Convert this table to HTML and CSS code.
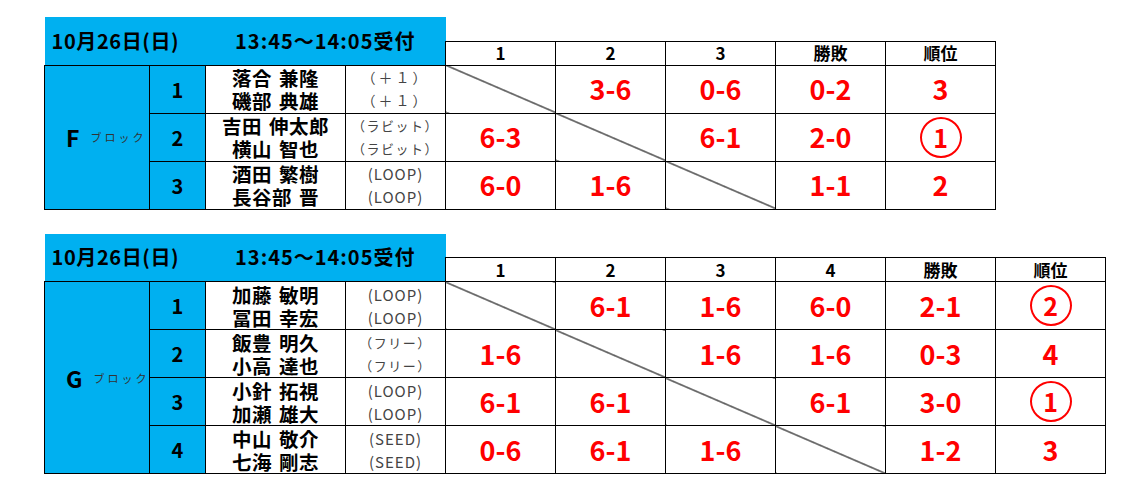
FILE: index.html
```html
<!DOCTYPE html>
<html lang="ja">
<head>
<meta charset="utf-8">
<title>ブロック表</title>
<link rel="stylesheet" href="styles.css">
</head>
<body>
<div class="page">
  <table class="league league-3">
    <colgroup>
      <col class="c-block"><col class="c-num"><col class="c-name"><col class="c-team">
      <col class="c-score"><col class="c-score"><col class="c-score"><col class="c-score"><col class="c-score">
    </colgroup>
    <tr class="r-title">
      <td class="title date" colspan="2" rowspan="2">10月26日(日)</td>
      <td class="title time" colspan="2" rowspan="2">13:45～14:05受付</td>
      <td class="blank" colspan="5"></td>
    </tr>
    <tr class="r-head">
      <th>1</th><th>2</th><th>3</th><th>勝敗</th><th>順位</th>
    </tr>
    <tr class="r-data">
      <td class="block" rowspan="3"><span class="letter">F</span><span class="sub">ブロック</span></td>
      <td class="num">1</td>
      <td class="names"><span>落合 兼隆</span><span>磯部 典雄</span></td>
      <td class="team plus"><span>（＋１）</span><span>（＋１）</span></td>
      <td class="diag"></td>
      <td class="score">3-6</td>
      <td class="score">0-6</td>
      <td class="score">0-2</td>
      <td class="score">3</td>
    </tr>
    <tr class="r-data">
      <td class="num">2</td>
      <td class="names"><span>吉田 伸太郎</span><span>横山 智也</span></td>
      <td class="team kana"><span>（ラビット）</span><span>（ラビット）</span></td>
      <td class="score">6-3</td>
      <td class="diag"></td>
      <td class="score">6-1</td>
      <td class="score">2-0</td>
      <td class="score"><span class="circle">1</span></td>
    </tr>
    <tr class="r-data">
      <td class="num">3</td>
      <td class="names"><span>酒田 繁樹</span><span>長谷部 晋</span></td>
      <td class="team"><span>(LOOP)</span><span>(LOOP)</span></td>
      <td class="score">6-0</td>
      <td class="score">1-6</td>
      <td class="diag"></td>
      <td class="score">1-1</td>
      <td class="score">2</td>
    </tr>
  </table>

  <table class="league league-4">
    <colgroup>
      <col class="c-block"><col class="c-num"><col class="c-name"><col class="c-team">
      <col class="c-score"><col class="c-score"><col class="c-score"><col class="c-score"><col class="c-score"><col class="c-score">
    </colgroup>
    <tr class="r-title">
      <td class="title date" colspan="2" rowspan="2">10月26日(日)</td>
      <td class="title time" colspan="2" rowspan="2">13:45～14:05受付</td>
      <td class="blank" colspan="6"></td>
    </tr>
    <tr class="r-head">
      <th>1</th><th>2</th><th>3</th><th>4</th><th>勝敗</th><th>順位</th>
    </tr>
    <tr class="r-data">
      <td class="block" rowspan="4"><span class="letter">G</span><span class="sub">ブロック</span></td>
      <td class="num">1</td>
      <td class="names"><span>加藤 敏明</span><span>冨田 幸宏</span></td>
      <td class="team"><span>(LOOP)</span><span>(LOOP)</span></td>
      <td class="diag"></td>
      <td class="score">6-1</td>
      <td class="score">1-6</td>
      <td class="score">6-0</td>
      <td class="score">2-1</td>
      <td class="score"><span class="circle">2</span></td>
    </tr>
    <tr class="r-data">
      <td class="num">2</td>
      <td class="names"><span>飯豊 明久</span><span>小高 達也</span></td>
      <td class="team kana"><span>（フリー）</span><span>（フリー）</span></td>
      <td class="score">1-6</td>
      <td class="diag"></td>
      <td class="score">1-6</td>
      <td class="score">1-6</td>
      <td class="score">0-3</td>
      <td class="score">4</td>
    </tr>
    <tr class="r-data">
      <td class="num">3</td>
      <td class="names"><span>小針 拓視</span><span>加瀬 雄大</span></td>
      <td class="team"><span>(LOOP)</span><span>(LOOP)</span></td>
      <td class="score">6-1</td>
      <td class="score">6-1</td>
      <td class="diag"></td>
      <td class="score">6-1</td>
      <td class="score">3-0</td>
      <td class="score"><span class="circle">1</span></td>
    </tr>
    <tr class="r-data">
      <td class="num">4</td>
      <td class="names"><span>中山 敬介</span><span>七海 剛志</span></td>
      <td class="team"><span>(SEED)</span><span>(SEED)</span></td>
      <td class="score">0-6</td>
      <td class="score">6-1</td>
      <td class="score">1-6</td>
      <td class="diag"></td>
      <td class="score">1-2</td>
      <td class="score">3</td>
    </tr>
  </table>
</div>
</body>
</html>
```

FILE: styles.css
```css
html, body {
  margin: 0;
  padding: 0;
  background: #ffffff;
}

.page {
  padding: 17px 0 0 44px;
  font-family: "Noto Sans CJK JP", "Noto Sans", sans-serif;
  color: #000;
}

.league {
  border-collapse: collapse;
  table-layout: fixed;
}

.league-3 { width: 951px; }
.league-4 { width: 1061px; margin-top: 24px; }

.c-block { width: 105px; }
.c-num { width: 56px; }
.c-name { width: 140px; }
.c-team { width: 100px; }
.c-score { width: 110px; }

.league td,
.league th {
  padding: 0;
  border: 1px solid #000;
  text-align: center;
  vertical-align: middle;
}

.r-title { height: 24px; }
.r-head { height: 24px; }
.r-data { height: 48px; }

.league td.blank {
  border: none;
}

.league td.title {
  background: #00b0f0;
  border-top: none;
  border-left: none;
  border-right: none;
  font-weight: 700;
  font-size: 20px;
  line-height: 24px;
  letter-spacing: 1px;
  white-space: nowrap;
}

.league td.date {
  text-align: left;
  padding-left: 7px;
  letter-spacing: 0.6px;
}

.league td.time {
  text-align: center;
  border-left: none;
}

.league th {
  font-weight: 700;
  font-size: 17px;
  line-height: 22px;
}

.league td.block {
  background: #00b0f0;
  text-align: left;
  padding-left: 21px;
  white-space: nowrap;
}

.letter {
  font-size: 23px;
  font-weight: 700;
  margin-right: 11px;
  vertical-align: middle;
}

.sub {
  font-size: 11px;
  letter-spacing: 3px;
  color: #333;
  vertical-align: middle;
}

.league td.num {
  background: #00b0f0;
  font-size: 20px;
  font-weight: 700;
}

.names span,
.team span {
  display: block;
  white-space: nowrap;
}

.names {
  font-size: 19.5px;
  font-weight: 700;
  line-height: 23px;
  letter-spacing: 0.5px;
  word-spacing: 2px;
}

.team {
  font-size: 15px;
  line-height: 23px;
  letter-spacing: 1px;
  color: #444;
}

.team.kana {
  font-size: 13px;
  letter-spacing: 1.5px;
}

.team.plus {
  font-size: 14px;
  letter-spacing: 3px;
}

.league td.score {
  color: #ff0000;
  font-size: 27px;
  font-weight: 700;
  line-height: 30px;
}

.circle {
  display: inline-flex;
  align-items: center;
  justify-content: center;
  box-sizing: border-box;
  width: 42px;
  height: 41px;
  border: 2.5px solid #ff0000;
  border-radius: 50%;
  font-size: 25px;
  line-height: 1;
}

.league td.diag {
  background: linear-gradient(to top right,
    transparent calc(50% - 0.8px),
    #000 calc(50% - 0.25px),
    #000 calc(50% + 0.25px),
    transparent calc(50% + 0.8px));
}
```
